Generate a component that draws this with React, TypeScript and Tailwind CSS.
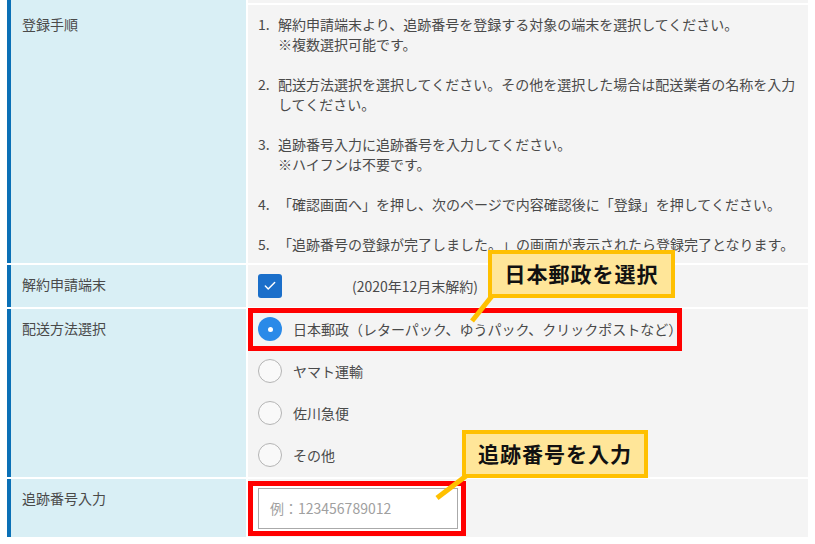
import { Check } from 'lucide-react'

const steps = [
  ['解約申請端末より、追跡番号を登録する対象の端末を選択してください。', '※複数選択可能です。'],
  ['配送方法選択を選択してください。その他を選択した場合は配送業者の名称を入力してください。'],
  ['追跡番号入力に追跡番号を入力してください。', '※ハイフンは不要です。'],
  ['「確認画面へ」を押し、次のページで内容確認後に「登録」を押してください。'],
  ['「追跡番号の登録が完了しました。」の画面が表示されたら登録完了となります。'],
]

const carriers = ['日本郵政（レターパック、ゆうパック、クリックポストなど）', 'ヤマト運輸', '佐川急便', 'その他']

function Row({ label, height, children }: { label: string; height: string; children?: React.ReactNode }) {
  return (
    <div className={`flex gap-[2px] ${height}`}>
      <div className="w-[239px] shrink-0 border-l-4 border-[#0a70b6] bg-[#d9eff5] pl-[11px] pt-[9px] leading-5">{label}</div>
      <div className="relative flex-1 bg-[#f4f4f4]">{children}</div>
    </div>
  )
}

function Callout({ text, className }: { text: string; className: string }) {
  return (
    <div
      className={`absolute flex items-center justify-center border-4 border-[#ffc000] bg-[#ffe699] text-[21px] font-bold tracking-[1px] text-[#111] ${className}`}
    >
      {text}
    </div>
  )
}

export default function App() {
  return (
    <div
      className="relative h-[544px] w-[815px] overflow-hidden bg-white text-[14px] text-[#4a4a4a] [text-spacing-trim:space-all]"
      style={{ fontFamily: '"Noto Sans CJK JP", "Noto Sans", sans-serif' }}
    >
      <div className="ml-[7px] flex w-[801px] flex-col gap-[2px]">
        <Row label="" height="h-[3px]" />

        <Row label="登録手順" height="h-[258px]">
          <ol className="pl-[10px] pr-[2px] pt-[9px] leading-5">
            {steps.map((lines, i) => (
              <li key={i} className="mb-5 flex">
                <span className="w-5 shrink-0">{i + 1}.</span>
                <div className={i === 4 ? 'whitespace-nowrap' : ''}>
                  {lines.map((l) => (
                    <p key={l}>{l}</p>
                  ))}
                </div>
              </li>
            ))}
          </ol>
        </Row>

        <Row label="解約申請端末" height="h-[42px]">
          <div className="flex h-full items-center pl-[10px]">
            <span className="flex h-6 w-6 items-center justify-center rounded-[3px] bg-[#1b6fca]">
              <Check className="h-[14px] w-[14px] text-white" strokeWidth={2.5} />
            </span>
            <span className="ml-[70px]">(2020年12月末解約)</span>
          </div>
        </Row>

        <Row label="配送方法選択" height="h-[168px]">
          <div className="-mt-[1px] pl-[10px]">
            {carriers.map((c, i) => (
              <div key={c} className="flex h-[42px] items-center gap-[11px]">
                {i === 0 ? (
                  <span className="flex h-6 w-6 items-center justify-center rounded-full bg-[#2a8ae8]">
                    <span className="h-[5px] w-[5px] rounded-full bg-white" />
                  </span>
                ) : (
                  <span className="h-6 w-6 rounded-full border border-[#b4b4b4] bg-[#f9f9f9]" />
                )}
                <span>{c}</span>
              </div>
            ))}
          </div>
          <div className="pointer-events-none absolute left-0 top-[-1px] h-[43px] w-[434px] border-[5px] border-[#ff0000]" />
        </Row>

        <Row label="追跡番号入力" height="h-[58px]">
          <div className="mt-[2px] w-[218px] border-[5px] border-[#ff0000] bg-white p-[2px] pl-[5px]">
            <div className="flex h-[41px] w-[200px] items-center border border-[#aaaaaa] bg-white pl-[11px] text-[#a0a0a0]">
              例：123456789012
            </div>
          </div>
        </Row>
      </div>

      <svg className="pointer-events-none absolute left-0 top-0" width="815" height="544">
        <line x1="492" y1="296" x2="472" y2="321" stroke="#ffc000" strokeWidth="5" />
        <line x1="466" y1="476" x2="437" y2="498" stroke="#ffc000" strokeWidth="5" />
      </svg>
      <Callout text="日本郵政を選択" className="left-[488px] top-[250px] h-[48px] w-[187px]" />
      <Callout text="追跡番号を入力" className="left-[462px] top-[430px] h-[48px] w-[186px]" />
    </div>
  )
}
